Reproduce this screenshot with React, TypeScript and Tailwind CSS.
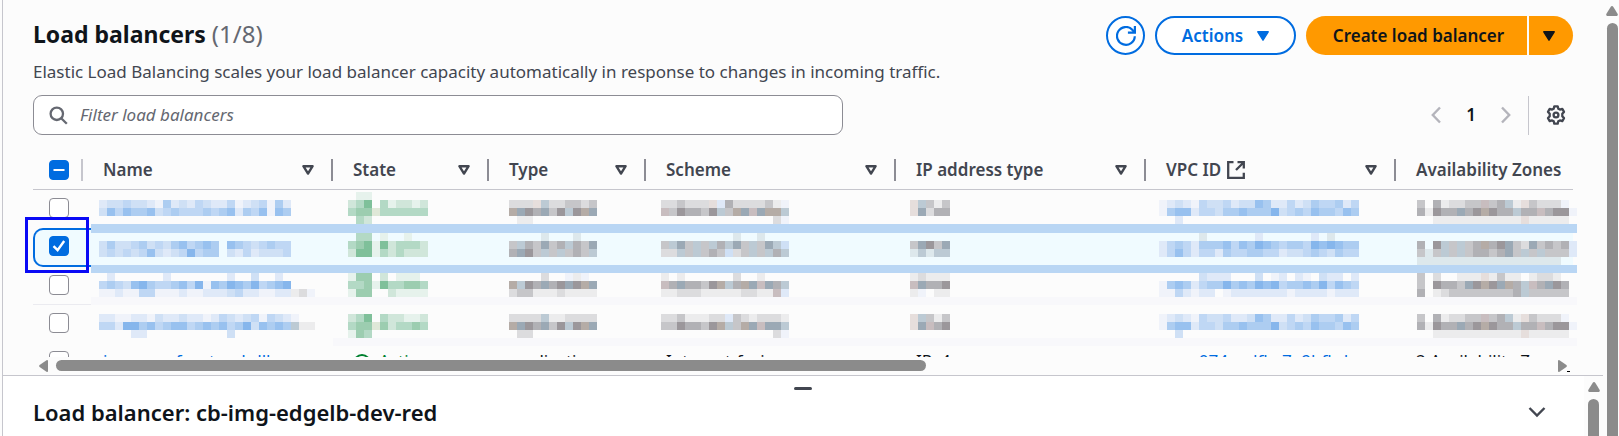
import { useState } from "react";

const palette: Record<string, string> = {
  a: "#f0f3fa", b: "#dfe9f8", c: "#cfe0f5", d: "#bfd7f4", e: "#adcdf1", f: "#98c1ef", g: "#86b6ec",
  H: "#e6f2ec", I: "#d0e6da", J: "#b3d9c5", K: "#9ccdb0", L: "#7fc09a", Y: "#dfe8d8",
  "1": "#ececed", "2": "#dcdcde", "3": "#c6c6c9", "4": "#b1b1b5", "5": "#9b979b",
  w: "#b5aca6", m: "#c8bdbf", k: "#9ba9b5", l: "#bccad4", p: "#e6dedc", t: "#dde8ec",
};

type Column = {
  label: string;
  width: string;
  offset: number;
  sortable: boolean;
  external?: boolean;
  last: string;
};

const columns: Column[] = [
  { label: "Name", width: "w-[250px]", offset: 16, sortable: true, last: "img-aws-frontend-dll" },
  { label: "State", width: "w-[156px]", offset: 15, sortable: true, last: "Active" },
  { label: "Type", width: "w-[157px]", offset: 20, sortable: true, last: "application" },
  { label: "Scheme", width: "w-[250px]", offset: 15, sortable: true, last: "Internet-facing" },
  { label: "IP address type", width: "w-[250px]", offset: 14, sortable: true, last: "IPv4" },
  { label: "VPC ID", width: "w-[250px]", offset: 13, sortable: true, external: true, last: "vpc-074aedfbc7a9bfbd" },
  { label: "Availability Zones", width: "w-auto", offset: 21, sortable: false, last: "2 Availability Zones" },
];

type Row = { selected?: boolean; top: number; cells: string[][] };

const rows: Row[] = [
  {
    top: 2,
    cells: [
      ["", "bccdccbaebcbdcbbdabcdaeb", "cfdfeefcdedddedefbedfafe", ""],
      [".HH", "IJL.JHIIHI", "JKKYJJJJJJ", ".JI"],
      ["", "222pl223323", "wk54k35l5wk", ".11"],
      ["", "223222pb4222231a", "m354435l3wkmkwwl", "..............2a"],
      ["", "pl313", "pk244"],
      ["", "abcbadccdbccfebbdbceddebd", "aeffbddceefeeegcdedfeedfe", "..b"],
      ["", "3.412233m34l1p3222a", "41544k45w544l44m455a", "..11111111111p11111"],
    ],
  },
  {
    selected: true,
    top: 5,
    cells: [
      ["", "ceccdecdcefdefe.fedcdedd", "cdcdcdfcbcdgdee.cbdbcccd", ""],
      [".JJ.H..H..", "JKLHLIJJJI", "ILLHJIJIII", ""],
      ["....t...t..", "3l43k34l43k", "4k53l3l343l", ""],
      [".........t..t...", "3lk3l3l4lk3l3klc", "22l3l343c23l3l4l", ""],
      ["", "3k53k", "tltll", ""],
      [".....t......b......b.t...", "bdedbeeefdfegfedeedgfgfee", "bdfdbddbeddeeddbccdedcedd", ""],
      ["", "4.5l3l34w45k32k3434b", "3t3l3l34434k3l3l333b", "tttttttttttttttttt"],
    ],
  },
  {
    top: 6,
    cells: [
      [".b......b.......b..c..b.", "dedcfgeddefdgafegfegdefg", "aabaaddaaabaabbbcdbbaabb12a"],
      ["HKK.I.HHH.", "JJKHLJJKKJ", "HKK..IHHHH"],
      ["....2..a1a.", "wl54k45k5wk", "23311121111"],
      ["1.1......2..1...", "m4k4435wl4wkmk4l", "11222111112211mb"],
      ["12111", "mk445", "1a.11"],
      [".....cbbb...c.ab.ba.cbb.b", "aefebdeegefegfgdeefegdfed", "aadbabb.abbbbbbbabbbbabbb"],
      ["3.2..111p1311.1221.", "3.5443k5w5kw4lm4k54", "4.12333333334l33333"],
    ],
  },
  {
    top: 9,
    cells: [
      ["bbaabbacbbcbbabdcbcdadcba", "ddbggefdeffdefefdegcfefel11", "....bb..........c"],
      ["IJL.JIIHHI", "JKKYKIJJKJ", "HKJ"],
      ["2222l112222", "wk54k35l5wk", ".22"],
      ["22311122b3212221", "3354435wl3wkmkkl", "..............2a"],
      ["pl313", "pkm45", ""],
      ["abcbadccdbbcfebbdbceddebd", "aeffbddceefeeegcdedfeedfe", "..c"],
      ["3.412233m34l1p3222a", "41544k45w544l44m455a", "..11111111111p11111"],
    ],
  },
];

function Mosaic({ lines, x, top }: { lines: string[]; x: number; top: number }) {
  return (
    <svg className="block h-[38px] w-full overflow-visible" shapeRendering="crispEdges" aria-hidden="true">
      {lines.flatMap((line, r) =>
        [...line].map((key, c) =>
          palette[key] ? (
            <rect key={`${r}-${c}`} x={x + c * 8} y={top + r * 8} width={8} height={8} fill={palette[key]} />
          ) : null
        )
      )}
    </svg>
  );
}

function Checkbox({ label, checked, mixed, onChange }: { label: string; checked: boolean; mixed?: boolean; onChange?: () => void }) {
  return (
    <label className="relative block size-5">
      <input
        type="checkbox"
        aria-label={label}
        checked={checked}
        onChange={onChange ?? (() => {})}
        className="block size-5 appearance-none rounded-[4px] border border-[#8c8c94] bg-white checked:border-[#006ce0] checked:bg-[#006ce0]"
      />
      {checked && (
        <svg viewBox="0 0 20 20" className="pointer-events-none absolute inset-0 size-5" fill="none" stroke="#fff" strokeWidth="2.4">
          {mixed ? <path d="M4.5 10h11" strokeWidth="2" /> : <path d="M4.5 10.2 8.6 14.2 15.2 5" />}
        </svg>
      )}
    </label>
  );
}

function SortIcon() {
  return (
    <svg viewBox="0 0 12 12" className="size-3" fill="none" stroke="#424650" strokeWidth="2.4" strokeLinejoin="round">
      <path d="M1.4 2.2h9.2L6 9.6z" />
    </svg>
  );
}

function Caret() {
  return (
    <svg viewBox="0 0 12 10" className="h-[10px] w-3" fill="currentColor" stroke="currentColor" strokeWidth="1.4" strokeLinejoin="round">
      <path d="M.8.8h10.4L6 9.2z" />
    </svg>
  );
}

function UpArrow() {
  return (
    <svg viewBox="0 0 12 10" className="block h-[10px] w-3" fill="#8b8b8b">
      <path d="M6 0q.8 0 1.4.9L11.7 8q.5 1.8-.9 2H1.2Q-.2 9.8.3 8L4.6.9Q5.2 0 6 0z" />
    </svg>
  );
}

export default function App() {
  const [selected, setSelected] = useState([false, true, false, false, false]);
  const toggle = (i: number) => setSelected((s) => s.map((v, j) => (j === i ? !v : v)));

  return (
    <div className="flex h-screen overflow-hidden bg-[#fcfcfc] pl-[2px] font-['Noto_Sans','Open_Sans',sans-serif] text-[17px] text-[#0f141a]">
      <div className="flex min-w-0 flex-1 flex-col border-l border-[#c6c6cd]">
        <main className="flex min-h-0 flex-1 flex-col pt-4">
          <header className="flex items-start justify-between pr-[30px] pl-[30px]">
            <h1 className="text-[23px] leading-9 font-bold">
              Load balancers <span className="text-[24px] font-normal text-[#656871]">(1/8)</span>
            </h1>
            <div className="flex h-[39px] items-stretch gap-[10px] font-semibold">
              <button aria-label="Refresh" className="flex w-[39px] items-center justify-center rounded-full border-2 border-[#006ce0] bg-white text-[#006ce0]">
                <svg viewBox="0 0 20 20" className="size-5" fill="none" stroke="currentColor" strokeWidth="2.2">
                  <path d="M18.8 10.2A8.9 8.9 0 1 1 16.3 3.7L18.3 6.2" />
                  <path d="M18.9 0v6.7h-7" />
                </svg>
              </button>
              <button className="flex w-[141px] items-center justify-center gap-[14px] rounded-full border-2 border-[#006ce0] bg-white text-[#006ce0]">
                Actions <Caret />
              </button>
              <div className="flex gap-[2px]">
                <button className="w-[221px] rounded-l-full bg-[#ff9900] pl-1">Create load balancer</button>
                <button aria-label="More create options" className="flex w-11 items-center rounded-r-full bg-[#ff9900] pl-[14px]">
                  <Caret />
                </button>
              </div>
            </div>
          </header>
          <p className="mt-[5px] pl-[30px] leading-6 text-[#424650]">
            Elastic Load Balancing scales your load balancer capacity automatically in response to changes in incoming traffic.
          </p>

          <div className="mt-[11px] flex items-center justify-between pr-[30px] pl-[30px]">
            <div className="flex h-10 w-[52.6%] items-center gap-3 rounded-[9px] border border-[#8c8c94] bg-white px-[15px]">
              <svg viewBox="0 0 19 19" className="size-[19px] shrink-0" fill="none" stroke="#656871" strokeWidth="2.3">
                <circle cx="7.8" cy="7.8" r="6.2" />
                <path d="m12.2 12.2 5.6 5.6" />
              </svg>
              <input
                type="text"
                aria-label="Filter load balancers"
                placeholder="Filter load balancers"
                className="min-w-0 flex-1 bg-transparent outline-none placeholder:text-[#656871] placeholder:italic"
              />
            </div>
            <div className="flex items-center">
              <button aria-label="Previous page" className="text-[#b4b4bb]">
                <svg viewBox="0 0 10 18" className="h-[18px] w-[10px]" fill="none" stroke="currentColor" strokeWidth="2.4">
                  <path d="M9 1.5 1.8 9 9 16.5" />
                </svg>
              </button>
              <button className="w-[60px] font-semibold">1</button>
              <button aria-label="Next page" className="text-[#b4b4bb]">
                <svg viewBox="0 0 10 18" className="h-[18px] w-[10px]" fill="none" stroke="currentColor" strokeWidth="2.4">
                  <path d="M1 1.5 8.2 9 1 16.5" />
                </svg>
              </button>
              <span className="ml-[17px] h-[39px] w-px bg-[#c6c6cd]" />
              <button aria-label="Preferences" className="mr-[7px] ml-[17px]">
                <svg viewBox="0 0 20 20" className="size-5" fill="none" stroke="#424650" strokeWidth="2.3" strokeLinejoin="round">
                  <path d="M8.3 1.3h3.4l.6 2.4 1.6.9 2.4-.7L18 6.9l-1.7 1.8v2.6l1.7 1.8-1.7 3-2.4-.7-1.6.9-.6 2.4H8.3l-.6-2.4-1.6-.9-2.4.7-1.7-3 1.7-1.8V8.7L2 6.9l1.7-3 2.4.7 1.6-.9z" />
                  <circle cx="10" cy="10" r="2.4" />
                </svg>
              </button>
            </div>
          </div>

          <div className="mt-[15px] min-h-0 flex-1 overflow-hidden pr-[30px] pl-[30px]">
            <table className="w-full table-fixed border-separate border-spacing-0 text-left">
              <thead>
                <tr className="h-10">
                  <th className="w-[50px] border-b border-[#c6c6cd] p-0">
                    <div className="flex h-[39px] items-center justify-between pl-4">
                      <Checkbox label="Select all load balancers" checked mixed />
                      <span className="h-[22px] w-[2px] bg-[#c6c6cd]" />
                    </div>
                  </th>
                  {columns.map((col) => (
                    <th key={col.label} className={`${col.width} border-b border-[#c6c6cd] p-0 font-semibold text-[#424650]`}>
                      <div className="flex h-[39px] items-center pl-5 whitespace-nowrap">
                        <span className="flex flex-1 items-center gap-[6px]">
                          {col.label}
                          {col.external && (
                            <svg viewBox="0 0 18 18" className="size-[18px]" fill="none" stroke="#424650" strokeWidth="2.3">
                              <path d="M6.5 1.2H1.2v15.6h15.6v-5M10.5 1.2h6.3v6.3M16.8 1.2 9 9" />
                            </svg>
                          )}
                        </span>
                        {col.sortable && (
                          <>
                            <SortIcon />
                            <span className="ml-[17px] h-[22px] w-[2px] bg-[#8c8c94]" />
                          </>
                        )}
                      </div>
                    </th>
                  ))}
                </tr>
              </thead>
              <tbody>
                {rows.map((row, i) => (
                  <tr key={i} className={row.selected ? "relative h-[39px] bg-[#f0fbff]" : "relative h-[38px]"}>
                    <td className={row.selected ? "bg-[#fcfcfc] p-0 align-top" : "p-0 align-top"}>
                      {row.selected && (
                        <>
                          <div className="absolute inset-y-0 left-0 w-[58px] rounded-l-[10px] border-2 border-r-0 border-[#006ce0] bg-[#f0fbff]" />
                          <div className="absolute -top-1 -right-1 left-[58px] h-[9px] bg-[#b9d6f4]" />
                          <div className="absolute -right-1 -bottom-[6px] left-[58px] z-10 h-2 bg-[#b9d6f4]" />
                          <div className="pointer-events-none absolute -top-[11px] -left-2 z-20 h-14 w-16 border-[3px] border-[#0a0af5]" />
                        </>
                      )}
                      {i === 2 && (
                        <>
                          <div className="absolute bottom-0 left-0 h-px w-[58px] bg-[#ebebf0]" />
                          <div className="absolute -right-1 bottom-0 left-[58px] h-2 bg-[#f8f8fb]" />
                        </>
                      )}
                      {i === 3 && <div className="absolute -right-1 -bottom-[3px] left-[300px] h-2 bg-[#f8f8fb]" />}
                      <div className="relative pt-2 pl-4">
                        <Checkbox label={`Select load balancer ${i + 1}`} checked={selected[i]} onChange={() => toggle(i)} />
                      </div>
                    </td>
                    {row.cells.map((lines, c) => (
                      <td key={c} className="p-0 align-top">
                        <Mosaic lines={lines} x={columns[c].offset} top={row.top} />
                      </td>
                    ))}
                  </tr>
                ))}
                <tr className="h-[38px]">
                  <td className="p-0 pt-2 pl-4 align-top">
                    <Checkbox label="Select load balancer 5" checked={selected[4]} onChange={() => toggle(4)} />
                  </td>
                  {columns.map((col, c) => (
                    <td key={col.label} className="p-0 pt-[6px] pl-5 align-top leading-6 whitespace-nowrap">
                      {c === 0 || c === 5 ? (
                        <a href="#details" className="text-[#006ce0]">{col.last}</a>
                      ) : c === 1 ? (
                        <span className="flex items-start gap-2 text-[#00802f]">
                          <svg viewBox="0 0 18 18" className="mt-[5px] size-[18px]" fill="none" stroke="currentColor" strokeWidth="2">
                            <circle cx="9" cy="9" r="8" />
                            <path d="m5 9 3 3 5-6" />
                          </svg>
                          {col.last}
                        </span>
                      ) : (
                        col.last
                      )}
                    </td>
                  ))}
                </tr>
              </tbody>
            </table>
          </div>

          <div className="flex h-[18px] shrink-0 items-center pr-[33px] pb-px pl-9" aria-hidden="true">
            <svg viewBox="0 0 9 12" className="h-3 w-[9px]" fill="#8b8b8b">
              <path d="M9 .8v10.4q-.2 1.2-1.5.6L.6 7Q-.4 6 .6 5L7.5.2Q8.8-.4 9 .8z" />
            </svg>
            <div className="ml-2 flex-1">
              <div className="h-[11px] w-[57.9%] rounded-full bg-[#8b8b8b]" />
            </div>
            <svg viewBox="0 0 12 12" className="h-3 w-3" fill="#8b8b8b">
              <path d="M0 .8v10.4q.2 1.2 1.5.6L8.4 7q1-1 0-2L1.5.2Q.2-.4 0 .8z" />
              <path d="M9 11h3v1H9z" fill="#000" />
            </svg>
          </div>
        </main>

        <section className="flex h-[61px] shrink-0 border-t border-[#c6c6cd] bg-white">
          <div className="flex min-w-0 flex-1 flex-col">
            <button aria-label="Resize panel" className="flex h-6 items-center justify-center pl-[18px]">
              <span className="h-[3px] w-[18px] rounded-full bg-[#424650]" />
            </button>
            <div className="flex items-center justify-between pr-[38px] pl-[30px]">
              <h2 className="text-[22px] leading-6 font-semibold">Load balancer: cb-img-edgelb-dev-red</h2>
              <button aria-label="Collapse panel">
                <svg viewBox="0 0 18 12" className="h-3 w-[18px]" fill="none" stroke="#424650" strokeWidth="2.4">
                  <path d="m1.5 2 7.5 7.5L16.5 2" />
                </svg>
              </button>
            </div>
          </div>
          <div className="flex w-[19px] flex-col items-center bg-[#fcfcfc] pt-[6px]" aria-hidden="true">
            <UpArrow />
            <div className="mt-[7px] w-[11px] flex-1 rounded-t-full bg-[#8b8b8b]" />
          </div>
        </section>
      </div>
      <div className="flex w-4 flex-col items-end pt-[6px] pr-px" aria-hidden="true">
        <UpArrow />
        <div className="mt-[7px] w-[11px] flex-1 rounded-t-full bg-[#8b8b8b]" />
      </div>
    </div>
  );
}
